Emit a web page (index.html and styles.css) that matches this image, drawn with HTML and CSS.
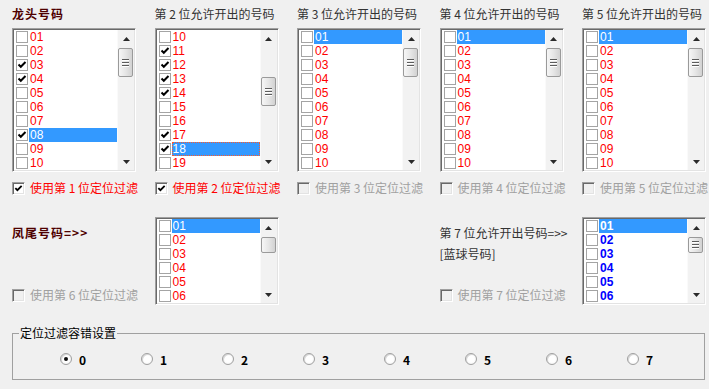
FILE: index.html
```html
<!DOCTYPE html>
<html lang="zh-CN">
<head>
<meta charset="utf-8">
<title>定位过滤</title>
<link rel="stylesheet" href="styles.css">
</head>
<body>
<div class="row1">
  <div class="col">
    <div class="title strong">龙头号码</div>
    <div class="lb">
      <div class="items">
        <div class="it"><span class="cb"></span><span class="tx">01</span></div>
        <div class="it"><span class="cb"></span><span class="tx">02</span></div>
        <div class="it"><span class="cb on"><svg viewBox="0 0 10 10"><polyline points="1.5,4.5 3.8,6.8 8.5,2"/></svg></span><span class="tx">03</span></div>
        <div class="it"><span class="cb on"><svg viewBox="0 0 10 10"><polyline points="1.5,4.5 3.8,6.8 8.5,2"/></svg></span><span class="tx">04</span></div>
        <div class="it"><span class="cb"></span><span class="tx">05</span></div>
        <div class="it"><span class="cb"></span><span class="tx">06</span></div>
        <div class="it"><span class="cb"></span><span class="tx">07</span></div>
        <div class="it"><span class="cb on"><svg viewBox="0 0 10 10"><polyline points="1.5,4.5 3.8,6.8 8.5,2"/></svg></span><span class="tx sel">08</span></div>
        <div class="it"><span class="cb"></span><span class="tx">09</span></div>
        <div class="it"><span class="cb"></span><span class="tx">10</span></div>
      </div>
      <div class="sb">
        <div class="btn"><svg viewBox="0 0 7 4"><polygon points="0,4 7,4 3.5,0"/></svg></div>
        <div class="track"><div class="thumb tall" style="margin-top:1px"><span class="grip"></span></div></div>
        <div class="btn"><svg viewBox="0 0 7 4"><polygon points="0,0 7,0 3.5,4"/></svg></div>
      </div>
    </div>
    <div class="chk"><span class="box on"><svg viewBox="0 0 10 10"><polyline points="1.5,4.5 3.8,6.8 8.5,2"/></svg></span><span class="lbl red">使用第 1 位定位过滤</span></div>
  </div>

  <div class="col">
    <div class="title">第 2 位允许开出的号码</div>
    <div class="lb">
      <div class="items">
        <div class="it"><span class="cb"></span><span class="tx">10</span></div>
        <div class="it"><span class="cb on"><svg viewBox="0 0 10 10"><polyline points="1.5,4.5 3.8,6.8 8.5,2"/></svg></span><span class="tx">11</span></div>
        <div class="it"><span class="cb on"><svg viewBox="0 0 10 10"><polyline points="1.5,4.5 3.8,6.8 8.5,2"/></svg></span><span class="tx">12</span></div>
        <div class="it"><span class="cb on"><svg viewBox="0 0 10 10"><polyline points="1.5,4.5 3.8,6.8 8.5,2"/></svg></span><span class="tx">13</span></div>
        <div class="it"><span class="cb on"><svg viewBox="0 0 10 10"><polyline points="1.5,4.5 3.8,6.8 8.5,2"/></svg></span><span class="tx">14</span></div>
        <div class="it"><span class="cb"></span><span class="tx">15</span></div>
        <div class="it"><span class="cb"></span><span class="tx">16</span></div>
        <div class="it"><span class="cb on"><svg viewBox="0 0 10 10"><polyline points="1.5,4.5 3.8,6.8 8.5,2"/></svg></span><span class="tx">17</span></div>
        <div class="it"><span class="cb on"><svg viewBox="0 0 10 10"><polyline points="1.5,4.5 3.8,6.8 8.5,2"/></svg></span><span class="tx sel focus">18</span></div>
        <div class="it"><span class="cb"></span><span class="tx">19</span></div>
      </div>
      <div class="sb">
        <div class="btn"><svg viewBox="0 0 7 4"><polygon points="0,4 7,4 3.5,0"/></svg></div>
        <div class="track"><div class="thumb tall" style="margin-top:30px"><span class="grip"></span></div></div>
        <div class="btn"><svg viewBox="0 0 7 4"><polygon points="0,0 7,0 3.5,4"/></svg></div>
      </div>
    </div>
    <div class="chk"><span class="box on"><svg viewBox="0 0 10 10"><polyline points="1.5,4.5 3.8,6.8 8.5,2"/></svg></span><span class="lbl red">使用第 2 位定位过滤</span></div>
  </div>

  <div class="col">
    <div class="title">第 3 位允许开出的号码</div>
    <div class="lb">
      <div class="items">
        <div class="it"><span class="cb"></span><span class="tx sel">01</span></div>
        <div class="it"><span class="cb"></span><span class="tx">02</span></div>
        <div class="it"><span class="cb"></span><span class="tx">03</span></div>
        <div class="it"><span class="cb"></span><span class="tx">04</span></div>
        <div class="it"><span class="cb"></span><span class="tx">05</span></div>
        <div class="it"><span class="cb"></span><span class="tx">06</span></div>
        <div class="it"><span class="cb"></span><span class="tx">07</span></div>
        <div class="it"><span class="cb"></span><span class="tx">08</span></div>
        <div class="it"><span class="cb"></span><span class="tx">09</span></div>
        <div class="it"><span class="cb"></span><span class="tx">10</span></div>
      </div>
      <div class="sb">
        <div class="btn"><svg viewBox="0 0 7 4"><polygon points="0,4 7,4 3.5,0"/></svg></div>
        <div class="track"><div class="thumb tall" style="margin-top:1px"><span class="grip"></span></div></div>
        <div class="btn"><svg viewBox="0 0 7 4"><polygon points="0,0 7,0 3.5,4"/></svg></div>
      </div>
    </div>
    <div class="chk"><span class="box off"></span><span class="lbl dis">使用第 3 位定位过滤</span></div>
  </div>

  <div class="col">
    <div class="title">第 4 位允许开出的号码</div>
    <div class="lb">
      <div class="items">
        <div class="it"><span class="cb"></span><span class="tx sel">01</span></div>
        <div class="it"><span class="cb"></span><span class="tx">02</span></div>
        <div class="it"><span class="cb"></span><span class="tx">03</span></div>
        <div class="it"><span class="cb"></span><span class="tx">04</span></div>
        <div class="it"><span class="cb"></span><span class="tx">05</span></div>
        <div class="it"><span class="cb"></span><span class="tx">06</span></div>
        <div class="it"><span class="cb"></span><span class="tx">07</span></div>
        <div class="it"><span class="cb"></span><span class="tx">08</span></div>
        <div class="it"><span class="cb"></span><span class="tx">09</span></div>
        <div class="it"><span class="cb"></span><span class="tx">10</span></div>
      </div>
      <div class="sb">
        <div class="btn"><svg viewBox="0 0 7 4"><polygon points="0,4 7,4 3.5,0"/></svg></div>
        <div class="track"><div class="thumb tall" style="margin-top:1px"><span class="grip"></span></div></div>
        <div class="btn"><svg viewBox="0 0 7 4"><polygon points="0,0 7,0 3.5,4"/></svg></div>
      </div>
    </div>
    <div class="chk"><span class="box off"></span><span class="lbl dis">使用第 4 位定位过滤</span></div>
  </div>

  <div class="col">
    <div class="title">第 5 位允许开出的号码</div>
    <div class="lb">
      <div class="items">
        <div class="it"><span class="cb"></span><span class="tx sel">01</span></div>
        <div class="it"><span class="cb"></span><span class="tx">02</span></div>
        <div class="it"><span class="cb"></span><span class="tx">03</span></div>
        <div class="it"><span class="cb"></span><span class="tx">04</span></div>
        <div class="it"><span class="cb"></span><span class="tx">05</span></div>
        <div class="it"><span class="cb"></span><span class="tx">06</span></div>
        <div class="it"><span class="cb"></span><span class="tx">07</span></div>
        <div class="it"><span class="cb"></span><span class="tx">08</span></div>
        <div class="it"><span class="cb"></span><span class="tx">09</span></div>
        <div class="it"><span class="cb"></span><span class="tx">10</span></div>
      </div>
      <div class="sb">
        <div class="btn"><svg viewBox="0 0 7 4"><polygon points="0,4 7,4 3.5,0"/></svg></div>
        <div class="track"><div class="thumb tall" style="margin-top:1px"><span class="grip"></span></div></div>
        <div class="btn"><svg viewBox="0 0 7 4"><polygon points="0,0 7,0 3.5,4"/></svg></div>
      </div>
    </div>
    <div class="chk"><span class="box off"></span><span class="lbl dis">使用第 5 位定位过滤</span></div>
  </div>
</div>

<div class="row2">
  <div class="side">
    <div class="strong">凤尾号码=&gt;&gt;</div>
    <div class="chk"><span class="box off"></span><span class="lbl dis">使用第 6 位定位过滤</span></div>
  </div>
  <div class="col">
    <div class="lb short">
      <div class="items">
        <div class="it"><span class="cb"></span><span class="tx sel">01</span></div>
        <div class="it"><span class="cb"></span><span class="tx">02</span></div>
        <div class="it"><span class="cb"></span><span class="tx">03</span></div>
        <div class="it"><span class="cb"></span><span class="tx">04</span></div>
        <div class="it"><span class="cb"></span><span class="tx">05</span></div>
        <div class="it"><span class="cb"></span><span class="tx">06</span></div>
      </div>
      <div class="sb">
        <div class="btn"><svg viewBox="0 0 7 4"><polygon points="0,4 7,4 3.5,0"/></svg></div>
        <div class="track"><div class="thumb small" style="margin-top:1px"></div></div>
        <div class="btn"><svg viewBox="0 0 7 4"><polygon points="0,0 7,0 3.5,4"/></svg></div>
      </div>
    </div>
  </div>
  <div class="col"></div>
  <div class="side">
    <div class="txt">第 7 位允许开出号码=&gt;&gt;</div>
    <div class="txt second">[蓝球号码]</div>
    <div class="chk push"><span class="box off"></span><span class="lbl dis">使用第 7 位定位过滤</span></div>
  </div>
  <div class="col">
    <div class="lb short blue">
      <div class="items">
        <div class="it"><span class="cb"></span><span class="tx sel">01</span></div>
        <div class="it"><span class="cb"></span><span class="tx">02</span></div>
        <div class="it"><span class="cb"></span><span class="tx">03</span></div>
        <div class="it"><span class="cb"></span><span class="tx">04</span></div>
        <div class="it"><span class="cb"></span><span class="tx">05</span></div>
        <div class="it"><span class="cb"></span><span class="tx">06</span></div>
      </div>
      <div class="sb">
        <div class="btn"><svg viewBox="0 0 7 4"><polygon points="0,4 7,4 3.5,0"/></svg></div>
        <div class="track"><div class="thumb small" style="margin-top:1px"><span class="grip"></span></div></div>
        <div class="btn"><svg viewBox="0 0 7 4"><polygon points="0,0 7,0 3.5,4"/></svg></div>
      </div>
    </div>
  </div>
</div>

<fieldset class="group">
  <legend>定位过滤容错设置</legend>
  <div class="radios">
    <label class="radio"><span class="dot on"></span><span class="rt">0</span></label>
    <label class="radio"><span class="dot"></span><span class="rt">1</span></label>
    <label class="radio"><span class="dot"></span><span class="rt">2</span></label>
    <label class="radio"><span class="dot"></span><span class="rt">3</span></label>
    <label class="radio"><span class="dot"></span><span class="rt">4</span></label>
    <label class="radio"><span class="dot"></span><span class="rt">5</span></label>
    <label class="radio"><span class="dot"></span><span class="rt">6</span></label>
    <label class="radio"><span class="dot"></span><span class="rt">7</span></label>
  </div>
</fieldset>
</body>
</html>
```
FILE: styles.css
```css
* { box-sizing: border-box; }
html, body { margin: 0; }
body {
  width: 709px;
  height: 389px;
  overflow: hidden;
  background: #f0f0f0;
  padding: 6px 0 0 12px;
  font-family: "Noto Sans CJK SC", "Liberation Sans", sans-serif;
  font-size: 12px;
  color: #333;
}

.row1, .row2 {
  display: grid;
  grid-template-columns: repeat(5, 124px);
  column-gap: 18.5px;
}

.col { display: flex; flex-direction: column; }

.title {
  height: 16px;
  line-height: 16px;
  margin-bottom: 6px;
  white-space: nowrap;
  color: #333;
}
.strong {
  font-weight: bold;
  color: #4e0000;
  letter-spacing: 1px;
  line-height: 14px;
  white-space: nowrap;
}
.title.strong { line-height: 16px; }

/* listbox */
.lb {
  width: 124px;
  height: 144px;
  display: flex;
  background: #fff;
  border: 1px solid;
  border-color: #a0a0a0 #fff #fff #a0a0a0;
  padding: 1px;
  box-shadow: inset 1px 1px 0 #696969, inset -1px -1px 0 #e3e3e3;
  color: #ff0000;
  font-family: "Liberation Sans", "Noto Sans CJK SC", sans-serif;
  line-height: 14px;
}
.lb.short { height: 88px; }
.lb.blue { color: #0000ff; font-weight: bold; }

.items { flex: 1; display: flex; flex-direction: column; overflow: hidden; }
.it { height: 14px; display: flex; align-items: center; }
.cb {
  width: 12px;
  height: 12px;
  margin-left: 2px;
  border: 1px solid #a4a4a4;
  background: #fff;
  display: flex;
  align-items: center;
  justify-content: center;
  flex: none;
}
.cb svg, .box svg { width: 10px; height: 10px; }
.cb polyline, .box polyline {
  fill: none;
  stroke: #000;
  stroke-width: 2;
}
.tx {
  flex: 1;
  height: 14px;
  margin-left: 1px;
  padding-left: 1px;
  line-height: 14px;
}
.tx.sel { background: #3399ff; color: #fff; }
.tx.focus {
  border: 1px dotted #ff5a2a;
  padding-left: 0;
  line-height: 12px;
}

/* scrollbar */
.sb {
  width: 17px;
  display: flex;
  flex-direction: column;
  background: #f2f2f2;
  border-left: 1px solid #fafafa;
}
.btn {
  height: 17px;
  display: flex;
  align-items: center;
  justify-content: center;
  flex: none;
}
.btn svg { width: 7px; height: 4px; }
.btn polygon { fill: #2a2a2a; }
.track { flex: 1; padding: 0 1px 0 0; }
.thumb {
  border: 1px solid #9a9a9a;
  border-radius: 2px;
  background: linear-gradient(to right, #f6f6f6, #e6e6e6 50%, #d2d2d2);
  display: flex;
  align-items: center;
  justify-content: center;
}
.thumb.tall { height: 29px; }
.thumb.small { height: 16px; }
.grip {
  width: 7px;
  height: 8px;
  background: repeating-linear-gradient(#5c5c5c 0 1px, #ffffff 1px 2px, transparent 2px 3px);
}

/* checkbox labels */
.chk {
  display: flex;
  align-items: center;
  height: 14px;
  margin-top: 9px;
  white-space: nowrap;
}
.box {
  width: 13px;
  height: 13px;
  flex: none;
  border: 1px solid;
  border-color: #a0a0a0 #fff #fff #a0a0a0;
  box-shadow: inset 1px 1px 0 #696969, inset -1px -1px 0 #e3e3e3;
  background: #fff;
  display: flex;
  align-items: center;
  justify-content: center;
}
.box.off { background: #f0f0f0; }
.box svg { width: 9px; height: 9px; }
.lbl { margin-left: 5px; line-height: 14px; }
.red { color: #ff0000; }
.dis { color: #a0a0a0; }

/* row 2 */
.row2 { margin-top: 22px; height: 88px; }
.side {
  display: flex;
  flex-direction: column;
  justify-content: space-between;
  padding: 9px 0 3px;
  white-space: nowrap;
}
.side .chk { margin-top: 0; }
.side .push { margin-top: auto; }
.txt { line-height: 14px; color: #333; }
.txt.second { margin-top: 7px; }

/* group */
.group {
  margin: 21px 0 0 0;
  width: 693px;
  border: 1px solid #a0a0a0;
  padding: 12px 0 13px 0;
  min-width: 0;
}
.group legend {
  margin-left: 6px;
  padding: 0 1px;
  line-height: 14px;
  color: #000;
}
.radios {
  display: grid;
  grid-template-columns: repeat(8, 81px);
  padding-left: 47px;
}
.radio { display: flex; align-items: center; height: 14px; }
.dot {
  width: 12px;
  height: 12px;
  border-radius: 50%;
  border: 1px solid #a0a0a0;
  background: radial-gradient(circle at 50% 50%, #fff 45%, #e8e8e8 100%);
  box-shadow: inset 1px 1px 0 #d8d8d8;
  display: flex;
  align-items: center;
  justify-content: center;
  flex: none;
}
.dot.on::after {
  content: "";
  width: 4px;
  height: 4px;
  border-radius: 50%;
  background: #111;
}
.rt { margin-left: 7px; font-weight: bold; color: #000; }
```
